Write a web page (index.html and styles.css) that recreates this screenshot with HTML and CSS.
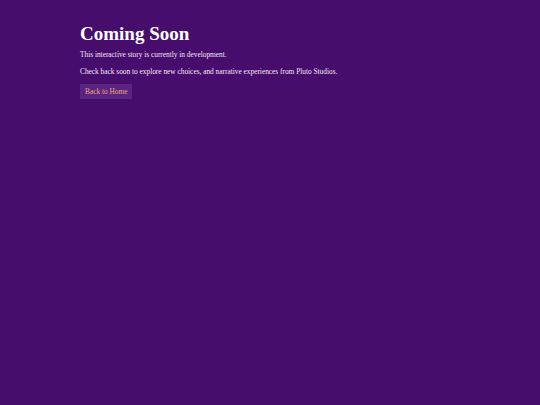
FILE: index.html
```html
<!DOCTYPE html>
<html lang="en">
<head>
<meta charset="utf-8">
<title>Coming Soon</title>
<link rel="stylesheet" href="styles.css">
</head>
<body>
<main class="page">
  <h1 class="title">Coming Soon</h1>
  <p class="text">This interactive story is currently in development.</p>
  <p class="text text-last">Check back soon to explore new choices, and narrative experiences from Pluto Studios.</p>
  <a class="btn" href="#">Back to Home</a>
</main>
</body>
</html>
```
FILE: styles.css
```css
html, body {
  margin: 0;
  padding: 0;
  background: #470d6d;
  height: 100%;
}
body {
  font-family: "Liberation Serif", serif;
  color: #f1e6f6;
}
.page {
  padding: 24px 80px;
}
.title {
  margin: 0 0 7px;
  font-size: 19px;
  font-weight: bold;
  color: #ffffff;
  line-height: 20px;
}
.text {
  margin: 0 0 9px;
  font-size: 7.35px;
  line-height: 8px;
}
.text-last {
  margin-bottom: 4px;
}
.btn {
  display: inline-block;
  padding: 3px 5px;
  background: #5a2482;
  color: #f0a677;
  font-size: 7.35px;
  line-height: 9px;
  text-decoration: none;
}
```
